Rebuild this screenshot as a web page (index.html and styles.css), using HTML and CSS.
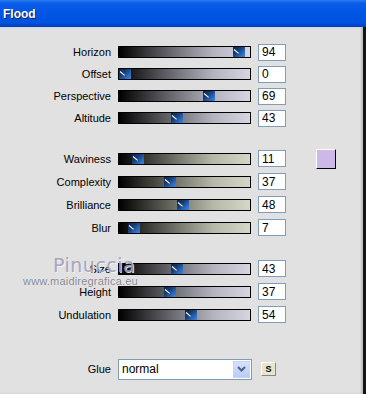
FILE: index.html
```html
<!DOCTYPE html>
<html>
  <head>
    <meta charset="UTF-8" />
    <title>Flood</title>
    <link rel="stylesheet" href="styles.css">
  </head>
  <body>
    <div class="window">
      <div class="titlebar">Flood</div>

      <div class="content">
        <div class="group">
          <div class="row">
            <label class="label">Horizon</label>
            <div class="track"><span class="thumb" style="--v: 94"></span></div>
            <input class="num" value="94" />
          </div>
          <div class="row">
            <label class="label">Offset</label>
            <div class="track"><span class="thumb" style="--v: 0"></span></div>
            <input class="num" value="0" />
          </div>
          <div class="row">
            <label class="label">Perspective</label>
            <div class="track"><span class="thumb" style="--v: 69"></span></div>
            <input class="num" value="69" />
          </div>
          <div class="row">
            <label class="label">Altitude</label>
            <div class="track"><span class="thumb" style="--v: 43"></span></div>
            <input class="num" value="43" />
          </div>
        </div>

        <div class="group group-wave">
          <div class="row">
            <label class="label">Waviness</label>
            <div class="track beige"><span class="thumb" style="--v: 11"></span></div>
            <input class="num" value="11" />
            <div class="swatch"></div>
          </div>
          <div class="row">
            <label class="label">Complexity</label>
            <div class="track beige"><span class="thumb" style="--v: 37"></span></div>
            <input class="num" value="37" />
          </div>
          <div class="row">
            <label class="label">Brilliance</label>
            <div class="track beige"><span class="thumb" style="--v: 48"></span></div>
            <input class="num" value="48" />
          </div>
          <div class="row">
            <label class="label">Blur</label>
            <div class="track beige"><span class="thumb" style="--v: 7"></span></div>
            <input class="num" value="7" />
          </div>
        </div>

        <div class="group group-size">
          <div class="row">
            <label class="label">Size</label>
            <div class="track"><span class="thumb" style="--v: 43"></span></div>
            <input class="num" value="43" />
          </div>
          <div class="row">
            <label class="label">Height</label>
            <div class="track"><span class="thumb" style="--v: 37"></span></div>
            <input class="num" value="37" />
          </div>
          <div class="row">
            <label class="label">Undulation</label>
            <div class="track"><span class="thumb" style="--v: 54"></span></div>
            <input class="num" value="54" />
          </div>

          <div class="watermark">
            <div class="wm-name">Pinuccia</div>
            <div class="wm-url">www.maidiregrafica.eu</div>
          </div>
        </div>

        <div class="row glue-row">
          <label class="label">Glue</label>
          <div class="select">
            <span class="select-text">normal</span>
            <span class="select-btn">
              <svg width="9" height="6" viewBox="0 0 9 6"><path d="M1 1 L4.5 4.5 L8 1" fill="none" stroke="#4d6185" stroke-width="2"/></svg>
            </span>
          </div>
          <button class="s-button">S</button>
        </div>
      </div>
    </div>
  </body>
</html>
```

FILE: styles.css
```css
* {
  box-sizing: border-box;
  margin: 0;
  padding: 0;
}

body {
  width: 366px;
  height: 394px;
  overflow: hidden;
  background: #e1e1e1;
  font-family: "Liberation Sans", Arial, sans-serif;
  font-size: 11px;
  color: #000;
}

.window {
  height: 394px;
  display: flex;
  flex-direction: column;
}

.titlebar {
  height: 27px;
  padding-left: 3px;
  display: flex;
  align-items: center;
  color: #fff;
  font-size: 12px;
  font-weight: bold;
  text-shadow: 1px 1px 0 #0a1c6a;
  background: linear-gradient(180deg, #2a7cf2 0%, #0a5de8 12%, #0055e5 50%, #0052de 85%, #003fc0 100%);
}

.content {
  flex: 1;
  padding-top: 14px;
  border-right: 3px solid #141414;
  box-shadow: inset -2px 0 2px #bdbdbd;
  position: relative;
}

.group {
  display: flex;
  flex-direction: column;
}

.group-wave {
  margin-top: 18px;
}

.group-wave .row,
.group-size .row {
  height: 23px;
}

.group-size {
  margin-top: 18px;
  position: relative;
}

.row {
  height: 22px;
  display: grid;
  grid-template-columns: 111px 133px 28px auto;
  column-gap: 7px;
  align-items: center;
}

.label {
  text-align: right;
  white-space: nowrap;
}

.track {
  height: 12px;
  border: 1px solid #000;
  position: relative;
  background: linear-gradient(90deg, #000 0%, #3a3a3e 22%, #7c7c84 48%, #b4b4c0 72%, #d6d6e2 100%);
}

.track.beige {
  background: linear-gradient(90deg, #000 0%, #3a3a36 22%, #7e7e74 48%, #b8b8a8 72%, #d6d6c6 100%);
}

.thumb {
  position: absolute;
  top: 0;
  left: calc(var(--v) * 1.215px);
  width: 12px;
  height: 10px;
  background: linear-gradient(135deg, #0b2348 0%, #163e78 40%, #2e6cc0 75%, #3f84d8 100%);
}

.thumb::after {
  content: "";
  position: absolute;
  left: 1px;
  top: 2px;
  width: 6px;
  height: 1px;
  background: #fff;
  transform: rotate(40deg);
  transform-origin: left center;
}

.num {
  width: 28px;
  height: 17px;
  border: 1px solid #7f9db9;
  background: #fff;
  font-family: "Liberation Sans", Arial, sans-serif;
  font-size: 12px;
  padding-left: 3px;
  outline: none;
}

.swatch {
  width: 20px;
  height: 20px;
  margin-left: 23px;
  background: #cdb8e9;
  border-top: 1px solid #fff;
  border-left: 1px solid #fff;
  border-right: 1px solid #000;
  border-bottom: 1px solid #000;
}

.watermark {
  position: absolute;
  left: 23px;
  top: -3px;
  pointer-events: none;
}

.wm-name {
  margin-left: 30px;
  font-family: "DejaVu Sans", sans-serif;
  font-size: 19px;
  letter-spacing: 0.5px;
  color: #a0a0b8;
  text-shadow: 1px 1px 0 #f4f4f8;
  opacity: 0.9;
}

.wm-url {
  margin-top: -1px;
  font-size: 11px;
  color: #868692;
  letter-spacing: 0.2px;
  text-shadow: 0 0 1px #ffffff;
}

.glue-row {
  margin-top: 32px;
  grid-template-columns: 111px 134px auto;
  column-gap: 7px;
}

.select {
  height: 21px;
  border: 1px solid #7f9db9;
  background: #fff;
  display: flex;
  align-items: center;
  justify-content: space-between;
  padding: 1px;
}

.select-text {
  font-size: 12px;
  padding-left: 2px;
}

.select-btn {
  width: 17px;
  height: 17px;
  display: flex;
  align-items: center;
  justify-content: center;
  background: linear-gradient(180deg, #d6e2fc 0%, #b9cdf8 100%);
  border: 1px solid #c3d3fd;
}

.s-button {
  margin-left: 2px;
  width: 15px;
  height: 14px;
  border: 1px solid #fff;
  border-right-color: #8a8678;
  border-bottom-color: #8a8678;
  background: #e8e4d0;
  font-family: "Liberation Sans", Arial, sans-serif;
  font-size: 9px;
  font-weight: bold;
  line-height: 12px;
  text-align: center;
}
```
